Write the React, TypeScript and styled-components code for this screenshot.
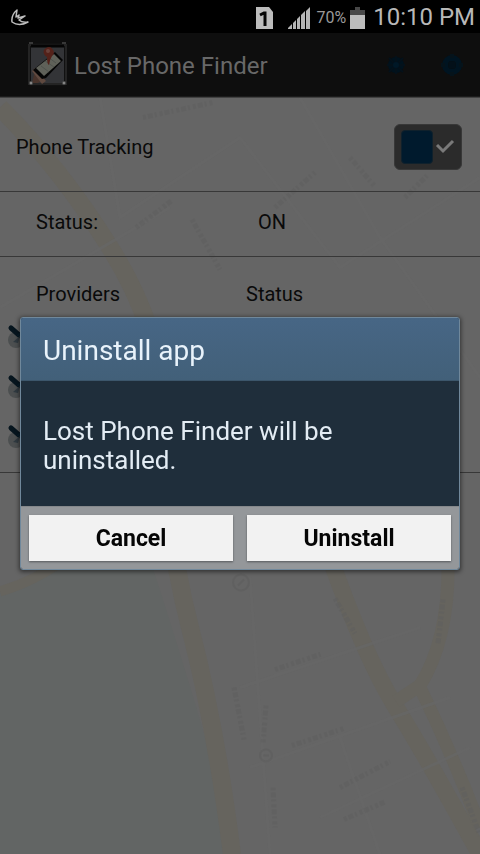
import React from "react";
import styled, { createGlobalStyle } from "styled-components";

const GlobalStyle = createGlobalStyle`
  * { box-sizing: border-box; }
  body {
    margin: 0;
    background: #656565;
    font-family: Roboto, "Liberation Sans", sans-serif;
  }
`;

const Screen = styled.div`
  display: flex;
  flex-direction: column;
  min-height: 100vh;
  color: #0a0a0a;
`;

const StatusBar = styled.header`
  display: flex;
  align-items: center;
  gap: 6px;
  height: 33px;
  padding: 2px 5px 0 10px;
  background: #000;
  color: #b8b8b8;
`;

const Notifications = styled.div`
  display: flex;
  flex: 1;
`;

const SignalIcon = styled.svg`
  margin-left: 8px;
`;

const BatteryLevel = styled.span`
  font-size: 16px;
  color: #9a9a9a;
`;

const BatteryIcon = styled.svg`
  margin-left: -2px;
`;

const Clock = styled.time`
  margin-left: 2px;
  font-size: 24px;
  line-height: 31px;
`;

const AppBar = styled.nav`
  display: flex;
  align-items: center;
  height: 64px;
  padding: 0 16px 0 27px;
  background: #0e0e0e;
  border-bottom: 1px solid #1c1c1c;
`;

const AppTitle = styled.h1`
  flex: 1;
  margin: 0;
  padding: 3px 0 0 6px;
  font-size: 24px;
  font-weight: 400;
  color: #686868;
`;

const BarButton = styled.button`
  display: flex;
  width: 24px;
  height: 24px;
  margin-left: 32px;
  padding: 0;
  border: 0;
  background: none;
`;

const Content = styled.main`
  position: relative;
  flex: 1;
  background: #656565;
  border-top: 1px solid #424242;
  font-size: 20px;
  line-height: 24px;
`;

const MapBackground = styled.svg`
  position: absolute;
  inset: 0;
  width: 100%;
  height: 100%;
`;

const Sections = styled.div`
  position: relative;
`;

const TrackingRow = styled.div`
  display: flex;
  align-items: center;
  justify-content: space-between;
  height: 94px;
  padding: 4px 18px 0 16px;
  border-bottom: 1px solid #383838;
`;

const Switch = styled.span`
  position: relative;
  display: flex;
  align-items: center;
  justify-content: space-between;
  width: 68px;
  height: 46px;
  padding: 0 6px;
  border: 1px solid #383838;
  border-radius: 6px;
  background: #2b2b2b;
`;

const SwitchInput = styled.input`
  position: absolute;
  inset: 0;
  width: 100%;
  height: 100%;
  margin: 0;
  opacity: 0;
`;

const SwitchThumb = styled.span`
  width: 32px;
  height: 34px;
  border: 1px solid #10212c;
  border-radius: 4px;
  background: #001a2d;
`;

const StateRow = styled.dl`
  display: flex;
  align-items: center;
  height: 65px;
  margin: 0;
  padding: 0 36px 4px;
  border-bottom: 1px solid #383838;
`;

const StateLabel = styled.dt`
  width: 222px;
`;

const StateValue = styled.dd`
  margin: 0;
`;

const ProviderTable = styled.table`
  width: 100%;
  border-collapse: collapse;
  table-layout: fixed;
  border-bottom: 1px solid #383838;
`;

const HeadCell = styled.th<{ $width?: string }>`
  width: ${(p) => p.$width ?? "auto"};
  height: 57px;
  padding: 25px 0 8px;
  font-weight: 400;
  text-align: left;
`;

const Cell = styled.td`
  height: 50px;
  padding: 0 0 0 7px;
`;

const TableFoot = styled.td`
  height: 8px;
  padding: 0;
`;

const Overlay = styled.div`
  position: fixed;
  inset: 33px 0 0;
  display: flex;
  align-items: center;
  padding: 0 20px;
`;

const Dialog = styled.section`
  width: 100%;
  overflow: hidden;
  border: 1px solid #70889b;
  border-radius: 3px;
  box-shadow: 0 1px 4px 1px rgba(0, 0, 0, 0.5);
  background: #1f2e3b;
`;

const DialogTitle = styled.h2`
  margin: 0;
  padding: 17px 22px 13px;
  border-bottom: 1px solid #3c566b;
  background: linear-gradient(#476685, #426079);
  color: #e9f3fb;
  font-size: 28px;
  font-weight: 400;
  line-height: 32px;
`;

const DialogText = styled.p`
  margin: 0;
  padding: 36px 56px 31px 22px;
  color: #e3ecf4;
  font-size: 26px;
  line-height: 29px;
`;

const DialogActions = styled.div`
  display: grid;
  grid-template-columns: 1fr 1fr;
  gap: 14px;
  padding: 8px;
  border-top: 1px solid #85888b;
  background: #94979a;
`;

const DialogButton = styled.button`
  height: 46px;
  padding: 2px 0 0;
  border: 0;
  background: #f2f2f2;
  box-shadow: 0 1px 2px #55585b;
  color: #060606;
  font: 700 23px/44px Roboto, "Liberation Sans", sans-serif;
`;

const streetNames = [
  "M136 130l36-27", "M143 20l70-15", "M275 110l40-35", "M350 60l24 28",
  "M405 100l24-24", "M192 122l28 50", "M275 572l48-16", "M292 648l52-17",
  "M340 690l50-26", "M344 722l42-18", "M335 501l20 35", "M443 502l-5 44",
  "M266 608l-3 38", "M273 690l2 40", "M462 690l18 48", "M234 590l10 52",
];

function MapArt() {
  return (
    <MapBackground viewBox="0 0 480 757" preserveAspectRatio="xMidYMid slice" aria-hidden="true">
      <path d="M0 492Q42 482 64 462L150 462Q182 560 208 650T222 757H0Z" fill="#626564" />
      <g fill="none" stroke="#66645e" strokeLinejoin="round">
        <path d="M0 10Q60 70 110 150T160 300Q164 430 190 530T232 757" strokeWidth="18" />
        <path d="M0 494Q35 484 70 458" strokeWidth="10" />
        <path d="M330 460Q365 560 396 610T480 757" strokeWidth="17" />
        <path d="M448 460Q450 540 420 588L396 604M420 590Q454 660 480 730" strokeWidth="13" />
      </g>
      <g fill="none" stroke="#676766" strokeWidth="3" opacity=".7">
        <path d="M100 0L120 120L240 40L340 170L480 80M0 210L170 110M240 590L420 530M250 670L450 600M320 720L470 650M300 0L380 140L480 280M250 480L270 757M340 640L380 757" />
      </g>
      <g fill="none" stroke="#5e5e5e" strokeWidth="5" strokeDasharray="3 2 5 2 2 3" opacity=".45">
        {streetNames.map((d) => <path key={d} d={d} />)}
      </g>
      <g fill="none" stroke="#5f5f5f" strokeWidth="2" opacity=".7">
        <circle cx="241" cy="485" r="8" />
        <circle cx="266" cy="658" r="6" />
        <path d="M238 488l6-6M263 658h6" />
      </g>
    </MapBackground>
  );
}

function AppIcon() {
  return (
    <svg width="41" height="45" viewBox="0 0 41 45" aria-hidden="true">
      <rect x="1" y="1" width="39" height="43" rx="3" fill="#111" />
      <rect x="2" y="3" width="37" height="39" fill="none" stroke="#242424" strokeWidth="2" />
      <rect x="4" y="5" width="33" height="36" fill="#333437" />
      <path d="M4 4h33" stroke="#050505" strokeWidth="3" />
      <path d="M2 1h4M35 1h4" stroke="#383838" strokeWidth="2" />
      <path d="M5 41l3-12 9 8-6 4z" fill="#49342c" />
      <path d="M5 29l3-3 11 13-4 3z" fill="#5f493f" />
      <path d="M28 10l8 8-17 18-4 1-9-9z" fill="#050505" />
      <path d="M27 12l7 7-17 15-8-8z" fill="#5f6159" />
      <path d="M14 24l8 6m-4-11l9 6m-6-10l8 6" stroke="#4e524d" strokeWidth="1" />
      <path d="M17 12a5 5 0 1 1 8 2q-2 3-3 9-2-1-2-8-2-1-3-3" fill="#54221a" />
      <circle cx="21" cy="9" r="2" fill="#69413a" />
      <circle cx="4" cy="41" r="2" fill="#515151" />
      <circle cx="37" cy="41" r="2" fill="#515151" />
      <path d="M3 41h2m31 0h2" stroke="#858585" strokeWidth="2" />
    </svg>
  );
}

function ProviderIcon() {
  return (
    <svg width="21" height="26" viewBox="0 0 21 26" aria-hidden="true">
      <circle cx="9" cy="16" r="8" fill="#4c4f50" />
      <path d="M4 4l8 7" stroke="#06151e" strokeWidth="5" strokeLinecap="round" />
      <path d="M11 10l8 7" stroke="#071c29" strokeWidth="4" />
      <path d="M6 18l7-6-2 7z" fill="#303a40" />
    </svg>
  );
}

export default function App() {
  return (
    <>
      <GlobalStyle />
      <Screen>
        <StatusBar>
          <Notifications>
            <svg width="20" height="18" viewBox="0 0 20 18" aria-hidden="true">
              <path d="M7 1Q1 6 2 13Q9 18 18 13Q12 14 9 11L15 7L8 9L9 6L6 8Z" fill="none" stroke="#bebebe" strokeWidth="1.5" strokeLinejoin="round" />
            </svg>
          </Notifications>
          <svg width="18" height="22" viewBox="0 0 18 22" aria-label="SIM 1">
            <path d="M0 0h13l4 5v17H0z" fill="#bcbcbc" />
            <path d="M4 8l4-2h1v13" fill="none" stroke="#050505" strokeWidth="3" />
          </svg>
          <SignalIcon width="22" height="22" viewBox="0 0 22 22" aria-label="Signal">
            <path d="M0 22v-1l4-4v5zM5 22v-6l3-3v9zM9 22V12l3-3v13zM13 22V8l4-4v18zM18 22V4l4-4v22z" fill="#b5b5b5" />
          </SignalIcon>
          <BatteryLevel>70%</BatteryLevel>
          <BatteryIcon width="15" height="22" viewBox="0 0 15 22" aria-label="Battery">
            <path d="M0 3h5V0h5v3h5v6H0z" fill="#484848" />
            <path d="M0 8h15v14H0z" fill="#bcbcbc" />
          </BatteryIcon>
          <Clock>10:10 PM</Clock>
        </StatusBar>
        <AppBar>
          <AppIcon />
          <AppTitle>Lost Phone Finder</AppTitle>
          <BarButton aria-label="Locate">
            <svg width="24" height="24" viewBox="0 0 24 24">
              <circle cx="12" cy="12" r="8" fill="#00121d" />
              <path d="M12 3v18M3 12h18M5 5l14 14M19 5L5 19" stroke="#04111a" strokeWidth="2" />
              <circle cx="12" cy="12" r="3" fill="#001827" />
            </svg>
          </BarButton>
          <BarButton aria-label="Settings">
            <svg width="24" height="24" viewBox="0 0 24 24">
              <circle cx="12" cy="12" r="7" fill="none" stroke="#001421" strokeWidth="6" />
              <circle cx="12" cy="12" r="4" fill="#031019" />
              <path d="M12 1v4m0 14v4M1 12h4m14 0h4" stroke="#05131b" strokeWidth="4" />
            </svg>
          </BarButton>
        </AppBar>
        <Content>
          <MapArt />
          <Sections>
            <TrackingRow>
              <label htmlFor="tracking">Phone Tracking</label>
              <Switch>
                <SwitchThumb />
                <svg width="20" height="18" viewBox="0 0 20 18" aria-hidden="true">
                  <path d="M2 7l6 6L18 3" fill="none" stroke="#7a7a7a" strokeWidth="3" />
                </svg>
                <SwitchInput id="tracking" type="checkbox" defaultChecked />
              </Switch>
            </TrackingRow>
            <StateRow>
              <StateLabel>Status:</StateLabel>
              <StateValue>ON</StateValue>
            </StateRow>
            <ProviderTable>
              <thead>
                <tr>
                  <HeadCell as="td" $width="36px" />
                  <HeadCell $width="210px">Providers</HeadCell>
                  <HeadCell>Status</HeadCell>
                </tr>
              </thead>
              <tbody>
                {[0, 1, 2].map((row) => (
                  <tr key={row}>
                    <Cell colSpan={3}><ProviderIcon /></Cell>
                  </tr>
                ))}
                <tr><TableFoot colSpan={3} /></tr>
              </tbody>
            </ProviderTable>
          </Sections>
        </Content>
      </Screen>
      <Overlay>
        <Dialog role="dialog" aria-modal="true" aria-labelledby="dialog-title">
          <DialogTitle id="dialog-title">Uninstall app</DialogTitle>
          <DialogText>Lost Phone Finder will be uninstalled.</DialogText>
          <DialogActions>
            <DialogButton>Cancel</DialogButton>
            <DialogButton>Uninstall</DialogButton>
          </DialogActions>
        </Dialog>
      </Overlay>
    </>
  );
}
